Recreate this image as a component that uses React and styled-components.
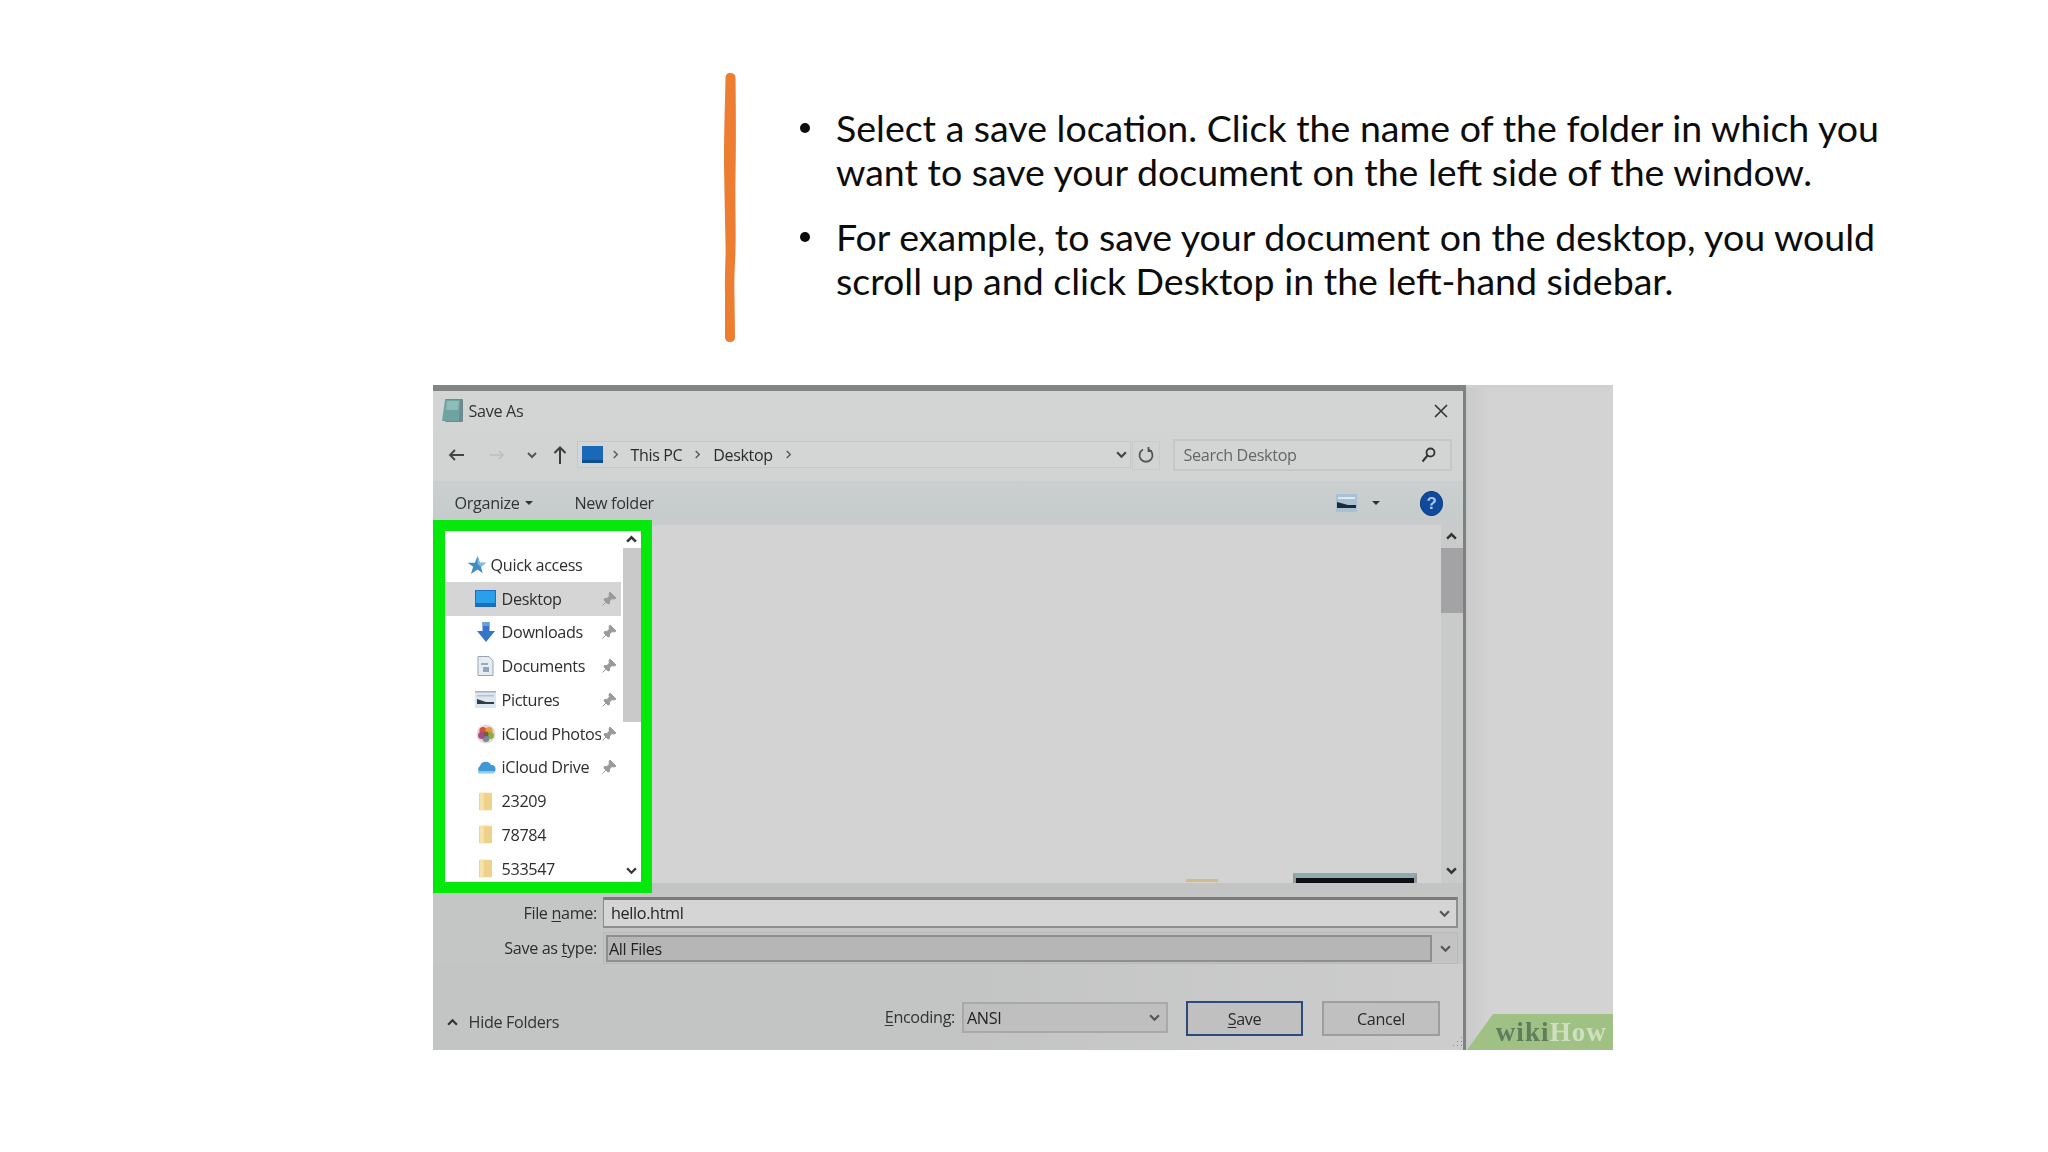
import React from "react";
import styled, { createGlobalStyle } from "styled-components";

const Global = createGlobalStyle`
  html, body { margin: 0; padding: 0; background: #fff; }
  #root { width: 2048px; height: 1152px; overflow: hidden; }
`;

const Page = styled.div`
  width: 2048px;
  height: 1152px;
  background: #fff;
  display: flex;
  flex-direction: column;
`;
const Slide = styled.section`
  display: flex;
  height: 385px;
  padding: 73px 0 0 724px;
  box-sizing: border-box;
`;
const Accent = styled.svg`
  width: 12px;
  height: 269px;
  flex: none;
  display: block;
`;
const Bullets = styled.ul`
  list-style: none;
  margin: 33px 0 0 64px;
  padding: 0;
  width: 1200px;
  font-family: Lato, "Open Sans", sans-serif;
  font-size: 37.5px;
  line-height: 44px;
  color: #0c0c0c;
`;
const Bullet = styled.li`
  position: relative;
  padding-left: 36px;
  margin-bottom: 21px;
  white-space: pre-line;
  &::before {
    content: "";
    position: absolute;
    left: 0;
    top: 17px;
    width: 10px;
    height: 10px;
    border-radius: 50%;
    background: #0c0c0c;
  }
`;

const Shot = styled.div`
  margin-left: 432.6px;
  width: 1180.4px;
  height: 665px;
  display: flex;
  filter: blur(0.65px);
  font-family: "Open Sans", "Noto Sans", sans-serif;
  font-size: 16.2px;
  letter-spacing: -0.35px;
  color: #333;
`;
const Window = styled.div`
  position: relative;
  width: 1033.4px;
  flex: none;
  box-sizing: border-box;
  border-top: 6px solid #818483;
  border-right: 3px solid #7f8180;
  background: #c4c5c5;
  display: flex;
  flex-direction: column;
`;
const Backdrop = styled.div`
  flex: 1;
  background: linear-gradient(90deg, #c9c9c9, #d3d3d3 24px);
  border-top: 3px solid #cfcfcf;
  display: flex;
  flex-direction: column;
  justify-content: flex-end;
`;
const Badge = styled.div`
  height: 36px;
  margin-left: 1px;
  background: #a0c184;
  clip-path: polygon(26px 0, 100% 0, 100% 100%, 0 100%);
  display: flex;
  align-items: center;
  justify-content: flex-end;
  padding-right: 6px;
  font-family: "Liberation Serif", serif;
  font-weight: 700;
  font-size: 27px;
  letter-spacing: 1.1px;
`;
const Wiki = styled.span`
  color: #5f7c5d;
`;
const How = styled.span`
  color: #cfe0c0;
`;

const TitleBar = styled.div`
  height: 40px;
  flex: none;
  box-sizing: border-box;
  display: flex;
  align-items: center;
  padding: 0 14px 1px 9px;
  background: #d2d5d4;
`;
const TitleText = styled.span`
  margin-left: 6px;
  margin-right: auto;
  font-size: 16.2px;
`;
const NavBar = styled.div`
  height: 50px;
  flex: none;
  box-sizing: border-box;
  display: flex;
  align-items: center;
  background: #d1d4d3;
  padding: 0 0 2px 15px;
`;
const NavIcon = styled.svg`
  flex: none;
  margin-left: ${(p) => p.$ml || 0}px;
`;
const AddressBox = styled.div`
  margin-left: 10px;
  width: 554px;
  height: 27px;
  margin-top: -1px;
  box-sizing: border-box;
  border: 1px solid #c6c8c8;
  background: #d4d6d5;
  display: flex;
  align-items: center;
  gap: 8px;
  padding: 0 3px 0 4px;
  flex: none;
`;
const Crumb = styled.span`
  color: #2b2b2b;
  font-size: 16px;
  margin: 0 3px;
`;
const Refresh = styled.div`
  width: 28px;
  height: 29px;
  margin-left: 1px;
  flex: none;
  box-sizing: border-box;
  border: 1px solid #c8cbca;
  display: flex;
  align-items: center;
  justify-content: center;
`;
const SearchBox = styled.div`
  width: 279px;
  height: 32px;
  margin-left: 13px;
  flex: none;
  box-sizing: border-box;
  border: 2px solid #c6c8c8;
  background: #d3d5d4;
  display: flex;
  align-items: center;
  justify-content: space-between;
  padding: 0 14px 0 9px;
  color: #666;
`;
const Toolbar = styled.div`
  height: 44px;
  flex: none;
  display: flex;
  align-items: center;
  background: linear-gradient(#cbcfcf, #c7cccd 70%, #cacbcb);
  padding: 0 20px 0 22px;
`;
const ToolLabel = styled.span`
  color: #333;
  margin-left: ${(p) => p.$ml || 0}px;
`;
const Caret = styled.i`
  width: 0;
  height: 0;
  border-left: 4px solid transparent;
  border-right: 4px solid transparent;
  border-top: 4px solid #333;
  margin-left: ${(p) => p.$ml}px;
`;
const ToolSpacer = styled.div`
  flex: 1;
`;
const Help = styled.div`
  width: 23px;
  height: 25px;
  border-radius: 50%;
  background: #0f4a9c;
  border: 1px solid #0a3a80;
  box-sizing: border-box;
  color: #a9c9ee;
  font-weight: 700;
  font-size: 17px;
  line-height: 23px;
  text-align: center;
  margin-left: 40px;
  font-family: "Liberation Sans", sans-serif;
`;

const Body = styled.div`
  height: 373px;
  margin-top: -5px;
  flex: none;
  display: flex;
  position: relative;
`;
const GreenFrame = styled.div`
  width: 219.4px;
  flex: none;
  box-sizing: border-box;
  border: 11px solid #05e80b;
  border-left-width: 12px;
  background: #fff;
  display: flex;
  overflow: hidden;
`;
const NavList = styled.div`
  flex: 1;
  padding-top: 17px;
  overflow: hidden;
`;
const Row = styled.div`
  height: 33.75px;
  display: flex;
  align-items: center;
  margin-right: 2px;
  padding-left: ${(p) => (p.$head ? 20 : 27)}px;
  background: ${(p) => (p.$on ? "#d5d5d5" : "transparent")};
`;
const RowIcon = styled.div`
  width: ${(p) => (p.$head ? 23 : 28)}px;
  height: 24px;
  flex: none;
  display: flex;
  align-items: center;
  justify-content: center;
`;
const RowLabel = styled.div`
  margin-left: ${(p) => (p.$head ? 3 : 2)}px;
  width: ${(p) => (p.$head ? 120 : 99)}px;
  overflow: hidden;
  white-space: nowrap;
  flex: none;
  color: #2e2e2e;
`;
const Track = styled.div`
  width: ${(p) => p.$w}px;
  flex: none;
  display: flex;
  flex-direction: column;
  background: ${(p) => p.$bg};
`;
const TrackEnd = styled.div`
  height: ${(p) => p.$h}px;
  flex: none;
  display: flex;
  align-items: center;
  justify-content: center;
`;
const Thumb = styled.div`
  height: ${(p) => p.$h}px;
  flex: none;
  background: ${(p) => p.$c};
`;
const TrackGap = styled.div`
  flex: 1;
`;
const MainPane = styled.div`
  flex: 1;
  margin-top: 5px;
  display: flex;
  flex-direction: column;
`;
const MainTop = styled.div`
  flex: 1;
  display: flex;
  min-height: 0;
`;
const Canvas = styled.div`
  flex: 1;
  background: #d3d3d3;
  display: flex;
  align-items: flex-end;
  padding-left: 534px;
  gap: 75px;
`;
const OrangeMark = styled.div`
  width: 32px;
  height: 3px;
  margin-bottom: 1px;
  background: #d6b98a;
`;
const DarkThumb = styled.div`
  width: 124px;
  height: 10px;
  box-sizing: border-box;
  border-top: 5px solid #8fa9ad;
  background: #0c1012;
  border-left: 3px solid #8f9a9e;
  border-right: 3px solid #8f9a9e;
`;
const PaneGutter = styled.div`
  height: 10px;
  flex: none;
  background: #c3c4c4;
`;

const FieldRow = styled.div`
  display: flex;
  align-items: center;
  height: ${(p) => p.$h}px;
  margin-top: ${(p) => p.$mt}px;
  flex: none;
`;
const FieldLabel = styled.div`
  width: 164.4px;
  flex: none;
  text-align: right;
  color: #2e2e2e;
  u { text-underline-offset: 2px; }
`;
const NameInput = styled.div`
  margin-left: 6px;
  width: 855px;
  height: 100%;
  flex: none;
  box-sizing: border-box;
  border: 2px solid #8f8f8f;
  border-top: 3px solid #7b7b7b;
  border-left: 1px solid #8a8a8a;
  background: #d5d5d5;
  display: flex;
  align-items: center;
  justify-content: space-between;
  padding: 0 6px 0 7px;
  color: #222;
`;
const TypeSelect = styled.div`
  margin-left: 6px;
  width: 855px;
  height: 100%;
  flex: none;
  box-sizing: border-box;
  border: 1px solid #b9b9b9;
  background: #c3c3c3;
  display: flex;
  align-items: center;
  padding: 2px 6px 1px 2px;
`;
const TypeValue = styled.div`
  width: 826px;
  height: 100%;
  box-sizing: border-box;
  border: 2px solid #8e8e8e;
  background: #b6b6b6;
  display: flex;
  align-items: center;
  padding-left: 1px;
  margin-right: auto;
  color: #222;
`;
const Footer = styled.div`
  flex: 1;
  display: flex;
  align-items: flex-start;
  padding: 37px 23px 0 14px;
  background: linear-gradient(90deg, #c3c4c4 50%, #cdcdcd);
`;
const HideFolders = styled.div`
  display: flex;
  align-items: center;
  gap: 11px;
  height: 34px;
  margin-top: 4px;
  color: #333;
`;
const EncodingLabel = styled.div`
  margin-left: auto;
  height: 32px;
  line-height: 32px;
  color: #333;
  u { text-underline-offset: 2px; }
`;
const Combo = styled.div`
  width: 206px;
  height: 31px;
  margin-left: 7px;
  margin-top: 1px;
  box-sizing: border-box;
  border: 2px solid #a9a9a9;
  background: #bfbfbf;
  display: flex;
  align-items: center;
  justify-content: space-between;
  padding: 0 6px 0 3px;
  color: #222;
`;
const Button = styled.div`
  width: ${(p) => p.$w}px;
  height: 35px;
  margin-left: ${(p) => p.$ml}px;
  box-sizing: border-box;
  border: 2px solid ${(p) => (p.$primary ? "#2d4a78" : "#9d9d9d")};
  background: #c0c0c0;
  display: flex;
  align-items: center;
  justify-content: center;
  color: #2a2a2a;
  u { text-underline-offset: 2px; }
`;
const Grip = styled.svg`
  position: absolute;
  right: 0;
  bottom: 1px;
`;

const Chevron = ({ dir = "down", size = 10, c = "#444", w = 2, ml }) => {
  const d = {
    down: "M1 3 L5 7 L9 3",
    up: "M1 7 L5 3 L9 7",
    right: "M3 1 L7 5 L3 9",
  }[dir];
  return (
    <NavIcon $ml={ml} width={size} height={size} viewBox="0 0 10 10">
      <path d={d} fill="none" stroke={c} strokeWidth={w} />
    </NavIcon>
  );
};

const Pin = () => (
  <svg width="16" height="16" viewBox="0 0 16 16">
    <path d="M9 1 L15 7 L13 8 L11 7.5 L8.5 10 L8.5 12.5 L7 13 L3 9 L3.5 7.5 L6 7.5 L8.5 5 L8 3 Z M5 11 L1.5 14.5" fill="#9a9a9a" stroke="#9a9a9a" strokeWidth="1" />
  </svg>
);

const ICONS = {
  star: (
    <svg width="21" height="20" viewBox="0 0 18 18">
      <path d="M10 1 L12 7 L17.5 7 L13 10.5 L14.5 16.5 L10 13 L4 17 L6 10.5 L1 7 L7.5 7 Z" fill="#3d8ec4" />
      <path d="M10 1 L12 7 L17.5 7 L13 10.5 L10 8 Z" fill="#7fbbdf" />
    </svg>
  ),
  desktop: (
    <svg width="21" height="17" viewBox="0 0 21 17">
      <rect width="21" height="17" fill="#1c6fc0" />
      <rect x="1" y="1" width="19" height="12" fill="#2aa0ea" />
    </svg>
  ),
  downloads: (
    <svg width="18" height="21" viewBox="0 0 18 21">
      <path d="M5.5 0 H12.5 V9 H18 L9 20 L0 9 H5.5 Z" fill="#3476c8" />
      <rect x="5.5" y="0" width="7" height="4" fill="#6a9fdc" />
    </svg>
  ),
  documents: (
    <svg width="17" height="20" viewBox="0 0 17 20">
      <path d="M1 .5 H12 L16 5 V19.5 H1 Z" fill="#e6edf2" stroke="#95a5b3" />
      <rect x="4" y="7" width="7" height="2" fill="#9ab" />
      <rect x="6" y="11" width="6" height="5" fill="#8fa6ba" />
    </svg>
  ),
  pictures: (
    <svg width="21" height="17" viewBox="0 0 21 17">
      <rect width="21" height="17" fill="#dce6ee" />
      <rect x="0" y="0" width="21" height="1.5" fill="#9cb2c4" />
      <rect x="2" y="4" width="17" height="1.5" fill="#b1c2d0" />
      <path d="M2 8 L11 11 L19 11 V13 H2 Z" fill="#2c3e4a" />
    </svg>
  ),
  photos: (
    <svg width="20" height="20" viewBox="0 0 20 20">
      <circle cx="10" cy="10" r="9.5" fill="#e9d9d4" />
      <circle cx="7" cy="6.5" r="3.6" fill="#d6503f" />
      <circle cx="13" cy="6.5" r="3.6" fill="#e0a038" />
      <circle cx="14.5" cy="11.5" r="3.4" fill="#8bae3e" />
      <circle cx="10" cy="14.5" r="3.4" fill="#6f8f9c" />
      <circle cx="5.5" cy="11.5" r="3.4" fill="#a14f86" />
      <circle cx="10" cy="10" r="2.5" fill="#7d5c3a" />
    </svg>
  ),
  cloud: (
    <svg width="20" height="14" viewBox="0 0 20 14">
      <path d="M4.5 13 A4 4 0 0 1 4 6 A6 6 0 0 1 15 5 A4 4 0 0 1 16 13 Z" fill="#3f97d6" />
      <rect x="2" y="11" width="16" height="2.5" rx="1" fill="#8cccf2" />
    </svg>
  ),
  folder: (
    <svg width="13" height="19" viewBox="0 0 14 19">
      <rect width="14" height="19" rx="1" fill="#eed28c" />
      <rect x="1" y="0" width="4" height="19" fill="#f6e3ac" />
    </svg>
  ),
};

const ROWS = [
  { icon: "desktop", label: "Desktop", pin: true, on: true },
  { icon: "downloads", label: "Downloads", pin: true },
  { icon: "documents", label: "Documents", pin: true },
  { icon: "pictures", label: "Pictures", pin: true },
  { icon: "photos", label: "iCloud Photos", pin: true },
  { icon: "cloud", label: "iCloud Drive", pin: true },
  { icon: "folder", label: "23209" },
  { icon: "folder", label: "78784" },
  { icon: "folder", label: "533547" },
];

export default function App() {
  return (
    <Page>
      <Global />
      <Slide>
        <Accent viewBox="0 0 12 269">
          <path
            d="M1.5 5 Q1.5 0 6 0 Q11.5 0 11.5 5 C12 40 12 80 11.5 105 C11 130 12 150 11.5 175 C11 195 10 205 10.5 225 L11 264 Q11 269 6 269 Q1 269 1 264 L1 220 C0.5 200 2 185 1.5 170 C1 150 0.5 120 0 90 C0 60 1 30 1.5 5 Z"
            fill="#ed7d31"
          />
        </Accent>
        <Bullets>
          <Bullet>{"Select a save location. Click the name of the folder in which you\nwant to save your document on the left side of the window."}</Bullet>
          <Bullet>{"For example, to save your document on the desktop, you would\nscroll up and click Desktop in the left-hand sidebar."}</Bullet>
        </Bullets>
      </Slide>
      <Shot>
        <Window>
          <TitleBar>
            <svg width="21" height="23" viewBox="0 0 21 23">
              <rect x="3" y="0" width="18" height="23" rx="1" fill="#6f8a8c" />
              <path d="M3 1 H18 L17 22 H0 Z" fill="#6fa3a3" />
              <path d="M5 2 H17 L16 11 H4 Z" fill="#8fbcb9" />
            </svg>
            <TitleText>Save As</TitleText>
            <svg width="16" height="16" viewBox="0 0 16 16">
              <path d="M2 2 L14 14 M14 2 L2 14" stroke="#333" strokeWidth="1.6" />
            </svg>
          </TitleBar>
          <NavBar>
            <NavIcon width="17" height="14" viewBox="0 0 17 14">
              <path d="M16 7 H2 M7 2 L2 7 L7 12" fill="none" stroke="#444" strokeWidth="1.8" />
            </NavIcon>
            <NavIcon $ml={25} width="15" height="12" viewBox="0 0 15 12">
              <path d="M0 6 H13 M9 2 L13 6 L9 10" fill="none" stroke="#bdbfbf" strokeWidth="1.6" />
            </NavIcon>
            <Chevron ml={22} c="#555" />
            <NavIcon $ml={16} width="14" height="18" viewBox="0 0 14 18">
              <path d="M7 18 V2 M1.5 7 L7 1.5 L12.5 7" fill="none" stroke="#3c3c3c" strokeWidth="2" />
            </NavIcon>
            <AddressBox>
              <svg width="21" height="17" viewBox="0 0 21 17">
                <rect width="21" height="17" fill="#1a68b8" />
                <rect y="14" width="21" height="3" fill="#0f4d90" />
              </svg>
              <Chevron dir="right" size={9} c="#555" w={1.5} />
              <Crumb>This PC</Crumb>
              <Chevron dir="right" size={9} c="#555" w={1.5} />
              <Crumb>Desktop</Crumb>
              <Chevron dir="right" size={9} c="#555" w={1.5} />
              <TrackGap />
              <Chevron c="#444" size={11} />
            </AddressBox>
            <Refresh>
              <svg width="16" height="18" viewBox="0 0 16 18">
                <path d="M5 3.5 A6.5 6.5 0 1 0 11 3.5 M10.5 1 V5 H14" fill="none" stroke="#555" strokeWidth="1.8" />
              </svg>
            </Refresh>
            <SearchBox>
              Search Desktop
              <svg width="15" height="16" viewBox="0 0 15 16">
                <circle cx="9.5" cy="5.5" r="4" fill="none" stroke="#333" strokeWidth="1.8" />
                <path d="M6.5 8.5 L1.5 14.5" stroke="#333" strokeWidth="2" />
              </svg>
            </SearchBox>
          </NavBar>
          <Toolbar>
            <ToolLabel>Organize</ToolLabel>
            <Caret $ml={6} />
            <ToolLabel $ml={41}>New folder</ToolLabel>
            <ToolSpacer />
            <svg width="21" height="18" viewBox="0 0 21 18">
              <rect width="21" height="18" fill="#a9c1d2" />
              <rect x="2" y="3" width="17" height="2" fill="#dfe8ee" />
              <path d="M1 8 L12 11 L20 11 V14 H1 Z" fill="#1e2b36" />
            </svg>
            <Caret $ml={15} />
            <Help>?</Help>
          </Toolbar>
          <Body>
            <GreenFrame>
              <NavList>
                <Row $head>
                  <RowIcon $head>{ICONS.star}</RowIcon>
                  <RowLabel $head>Quick access</RowLabel>
                </Row>
                {ROWS.map((r) => (
                  <Row key={r.label} $on={r.on}>
                    <RowIcon>{ICONS[r.icon]}</RowIcon>
                    <RowLabel>{r.label}</RowLabel>
                    {r.pin && <Pin />}
                  </Row>
                ))}
              </NavList>
              <Track $w={18} $bg="#fff">
                <TrackEnd $h={17}><Chevron dir="up" c="#333" size={11} w={2.2} /></TrackEnd>
                <Thumb $h={174} $c="#c9c9c9" />
                <TrackGap />
                <TrackEnd $h={24}><Chevron c="#333" size={11} w={2} /></TrackEnd>
              </Track>
            </GreenFrame>
            <MainPane>
              <MainTop>
                <Canvas>
                  <OrangeMark />
                  <DarkThumb />
                </Canvas>
                <Track $w={22} $bg="#c9cbcb">
                  <TrackEnd $h={23}><Chevron dir="up" c="#333" size={11} w={2.2} /></TrackEnd>
                  <Thumb $h={65} $c="#a3a3a6" />
                  <TrackGap />
                  <TrackEnd $h={26}><Chevron c="#333" size={11} w={2.2} /></TrackEnd>
                </Track>
              </MainTop>
              <PaneGutter />
            </MainPane>
          </Body>
          <FieldRow $h={31} $mt={4}>
            <FieldLabel>File <u>n</u>ame:</FieldLabel>
            <NameInput>
              hello.html
              <Chevron c="#555" size={11} />
            </NameInput>
          </FieldRow>
          <FieldRow $h={32} $mt={4}>
            <FieldLabel>Save as <u>t</u>ype:</FieldLabel>
            <TypeSelect>
              <TypeValue>All Files</TypeValue>
              <Chevron c="#555" size={11} />
            </TypeSelect>
          </FieldRow>
          <Footer>
            <HideFolders>
              <Chevron dir="up" c="#333" size={11} />
              Hide Folders
            </HideFolders>
            <EncodingLabel><u>E</u>ncoding:</EncodingLabel>
            <Combo>
              ANSI
              <Chevron c="#555" size={11} />
            </Combo>
            <Button $w={117} $ml={18} $primary><span><u>S</u>ave</span></Button>
            <Button $w={118} $ml={19}>Cancel</Button>
          </Footer>
          <Grip width="14" height="14" viewBox="0 0 14 14">
            <path d="M12 2h1v1h-1zM8 6h1v1H8zM12 6h1v1h-1zM4 10h1v1H4zM8 10h1v1H8zM12 10h1v1h-1z" fill="#8a8a8a" />
          </Grip>
        </Window>
        <Backdrop>
          <Badge>
            <Wiki>wiki</Wiki>
            <How>How</How>
          </Badge>
        </Backdrop>
      </Shot>
    </Page>
  );
}
